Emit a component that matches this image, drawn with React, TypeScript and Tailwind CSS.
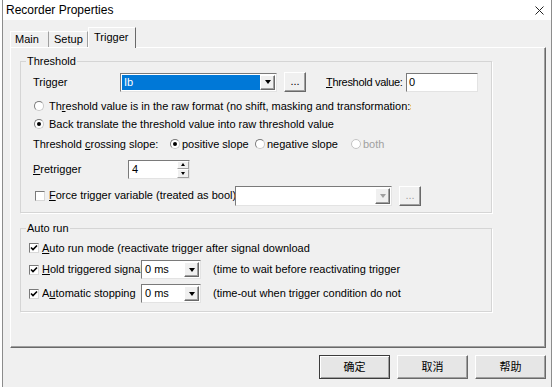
import React from "react";

const Radio: React.FC<{ checked?: boolean; disabled?: boolean }> = ({ checked, disabled }) => (
  <span
    className={`flex h-[10px] w-[10px] shrink-0 items-center justify-center rounded-full border bg-white ${
      disabled ? "border-[#c4c4c4]" : "border-t-[#7a7a7a] border-l-[#7a7a7a] border-r-[#c8c8c8] border-b-[#c8c8c8]"
    }`}
  >
    {checked && <span className="h-[4px] w-[4px] rounded-full bg-black" />}
  </span>
);

const Check: React.FC<{ checked?: boolean }> = ({ checked }) => (
  <span className="flex h-[10px] w-[10px] shrink-0 items-center justify-center border border-t-[#7a7a7a] border-l-[#7a7a7a] border-r-[#d8d8d8] border-b-[#d8d8d8] bg-white">
    {checked && (
      <svg width="8" height="8" viewBox="0 0 8 8">
        <path d="M1 3.5 L3 5.5 L7 1.5" stroke="#000" strokeWidth="1.6" fill="none" />
      </svg>
    )}
  </span>
);

const Arrow: React.FC<{ disabled?: boolean }> = ({ disabled }) => (
  <span className="flex h-full w-[15px] shrink-0 items-center justify-center border border-t-white border-l-white border-r-[#696969] border-b-[#696969] bg-[#f0f0f0] shadow-[inset_-1px_-1px_0_#a0a0a0]">
    <span
      className={`h-0 w-0 border-x-[3.5px] border-t-[4px] border-x-transparent ${
        disabled ? "border-t-[#a0a0a0]" : "border-t-black"
      }`}
    />
  </span>
);

const Combo: React.FC<{ w: string; text?: string; selected?: boolean; disabled?: boolean; h?: string }> = ({
  w,
  text,
  selected,
  disabled,
  h = "h-[19px]",
}) => (
  <div
    className={`${w} ${h} flex shrink-0 border border-t-[#7a7a7a] border-l-[#7a7a7a] border-r-[#e3e3e3] border-b-[#e3e3e3] bg-white p-[1px]`}
  >
    <div className={`flex flex-1 items-center pl-[2px] ${selected ? "bg-[#0078d7] text-white" : ""}`}>
      {text}
    </div>
    <Arrow disabled={disabled} />
  </div>
);

const Dots: React.FC<{ disabled?: boolean }> = ({ disabled }) => (
  <div
    className={`flex h-[20px] w-[22px] shrink-0 items-center justify-center border border-t-white border-l-white border-r-[#696969] border-b-[#696969] pb-[2px] shadow-[inset_-1px_-1px_0_#a0a0a0] text-[11px] leading-[12px] ${
      disabled ? "text-[#a0a0a0]" : "text-black"
    }`}
  >
    ...
  </div>
);

const Btn: React.FC<{ label: string; primary?: boolean }> = ({ label, primary }) => (
  <div
    className={`flex h-[24px] w-[71px] items-center justify-center border bg-[#e6e6e6] text-[11px] ${
      primary
        ? "border-[#3c3c3c] shadow-[inset_1px_1px_0_white,inset_-1px_-1px_0_#a0a0a0]"
        : "border-t-white border-l-white border-r-[#696969] border-b-[#696969] shadow-[inset_-1px_-1px_0_#a0a0a0]"
    }`}
  >
    {label}
  </div>
);

const App: React.FC = () => {
  return (
    <div className="flex h-[387px] w-[554px] bg-white font-['Liberation_Sans','Noto_Sans_CJK_SC',sans-serif] text-[11px] text-black">
      <div className="ml-[2px] flex w-[550px] flex-col border-x border-[#8c8c8c] bg-[#f0f0f0]">
        {/* title bar */}
        <div className="flex h-[20px] shrink-0 items-center justify-between bg-white pl-[3px] pr-[7px]">
          <span className="text-[12px]">Recorder Properties</span>
          <svg width="9" height="9" viewBox="0 0 9 9">
            <path d="M0.5 0.5 L8.5 8.5 M8.5 0.5 L0.5 8.5" stroke="#222" strokeWidth="1" />
          </svg>
        </div>

        {/* tabs */}
        <div className="flex h-[27px] items-end pl-[7px]">
          <div className="flex h-[16px] w-[39px] items-center border-l border-t border-r border-l-white border-t-white border-r-[#a0a0a0] pl-[4px]">
            Main
          </div>
          <div className="flex h-[16px] w-[39px] items-center border-t border-r border-t-white border-r-[#a0a0a0] pl-[5px]">
            Setup
          </div>
          <div className="relative z-10 -mb-[1px] flex h-[21px] w-[48px] items-center border-l border-t border-r border-l-white border-t-white border-r-[#696969] bg-[#f0f0f0] pb-[2px] pl-[5px]">
            Trigger
          </div>
        </div>

        {/* tab panel */}
        <div className="ml-[7px] h-[301px] w-[536px] border border-l-white border-t-white border-r-[#696969] border-b-[#696969] shadow-[inset_-1px_-1px_0_#a0a0a0]">
          <fieldset className="ml-[9px] mt-[6px] h-[159px] w-[472px] border border-[#d5d5d5] shadow-[1px_1px_0_white]">
            <legend className="ml-[5px] px-[1px] leading-[14px]">Threshold</legend>

            <div className="mt-[4px] flex h-[20px] items-center pl-[12px]">
              <span className="w-[87px]">Trigger</span>
              <Combo w="w-[157px]" text="Ib" selected />
              <div className="ml-[7px]">
                <Dots />
              </div>
              <span className="ml-[20px] w-[80px] shrink-0 whitespace-nowrap tracking-[-0.3px]">
                <span className="underline">T</span>hreshold value:
              </span>
              <div className="flex h-[19px] w-[72px] shrink-0 items-center border border-t-[#7a7a7a] border-l-[#7a7a7a] border-r-[#e3e3e3] border-b-[#e3e3e3] bg-white pl-[2px]">
                0
              </div>
            </div>

            <div className="mt-[6px] flex h-[16px] items-center gap-[5px] pl-[13px]">
              <Radio />
              <span className="w-[362px] overflow-hidden whitespace-nowrap">
                Th<span className="underline">r</span>eshold value is in the raw format (no shift, masking and transformation:s
              </span>
            </div>
            <div className="mt-[2px] flex h-[16px] items-center gap-[5px] pl-[13px]">
              <Radio checked />
              <span>Back translate the threshold value into raw threshold value</span>
            </div>

            <div className="mt-[4px] flex h-[16px] items-center pl-[12px]">
              <span className="w-[137px]">
                Threshold <span className="underline">c</span>rossing slope:
              </span>
              <span className="flex w-[85px] items-center gap-[1px]">
                <Radio checked />
                <span className="ml-[1px]">positive slope</span>
              </span>
              <span className="flex w-[96px] items-center gap-[1px]">
                <Radio />
                <span className="ml-[1px]">negative slope</span>
              </span>
              <span className="flex items-center gap-[1px] text-[#a0a0a0]">
                <Radio disabled />
                <span className="ml-[1px]">both</span>
              </span>
            </div>

            <div className="mt-[8px] flex h-[18px] items-center pl-[12px]">
              <span className="w-[95px]">
                <span className="underline">P</span>retrigger
              </span>
              <div className="flex h-[19px] w-[62px] border border-t-[#7a7a7a] border-l-[#7a7a7a] border-r-[#e3e3e3] border-b-[#e3e3e3] bg-white">
                <span className="flex flex-1 items-center pl-[3px]">4</span>
                <div className="flex w-[12px] flex-col">
                  <div className="flex flex-1 items-center justify-center border border-t-white border-l-white border-r-[#a0a0a0] border-b-[#a0a0a0] bg-[#f0f0f0]">
                    <span className="h-0 w-0 border-x-[2.5px] border-b-[3px] border-x-transparent border-b-black" />
                  </div>
                  <div className="flex flex-1 items-center justify-center border border-t-white border-l-white border-r-[#a0a0a0] border-b-[#a0a0a0] bg-[#f0f0f0]">
                    <span className="h-0 w-0 border-x-[2.5px] border-t-[3px] border-x-transparent border-t-black" />
                  </div>
                </div>
              </div>
            </div>

            <div className="mt-[7px] flex h-[21px] items-center pl-[14px]">
              <Check />
              <span className="ml-[4px] w-[186px] overflow-hidden whitespace-nowrap">
                <span className="underline">F</span>orce trigger variable (treated as bool)
              </span>
              <Combo w="w-[157px]" h="h-[20px]" disabled />
              <div className="ml-[7px]">
                <Dots disabled />
              </div>
            </div>
          </fieldset>

          <fieldset className="ml-[9px] mt-[8px] h-[91px] w-[472px] border border-[#d5d5d5] shadow-[1px_1px_0_white]">
            <legend className="ml-[5px] px-[1px] leading-[14px]">Auto run</legend>

            <div className="mt-[5px] flex h-[16px] items-center pl-[8px]">
              <Check checked />
              <span className="ml-[3px]">
                <span className="underline">A</span>uto run mode (reactivate trigger after signal download
              </span>
            </div>

            <div className="mt-[4px] flex h-[19px] items-center pl-[8px]">
              <Check checked />
              <span className="ml-[3px] w-[99px] overflow-hidden whitespace-nowrap">
                <span className="underline">H</span>old triggered signal
              </span>
              <Combo w="w-[60px]" text="0 ms" />
              <span className="ml-[12px]">(time to wait before reactivating trigger</span>
            </div>

            <div className="mt-[5px] flex h-[19px] items-center pl-[8px]">
              <Check checked />
              <span className="ml-[3px] w-[99px] overflow-hidden whitespace-nowrap">
                A<span className="underline">u</span>tomatic stopping
              </span>
              <Combo w="w-[60px]" text="0 ms" />
              <span className="ml-[12px]">(time-out when trigger condition do not</span>
            </div>
          </fieldset>
        </div>

        {/* buttons */}
        <div className="ml-[316px] mt-[7px] flex gap-[7px]">
          <Btn label="确定" primary />
          <Btn label="取消" />
          <Btn label="帮助" />
        </div>
      </div>
    </div>
  );
};

export default App;
